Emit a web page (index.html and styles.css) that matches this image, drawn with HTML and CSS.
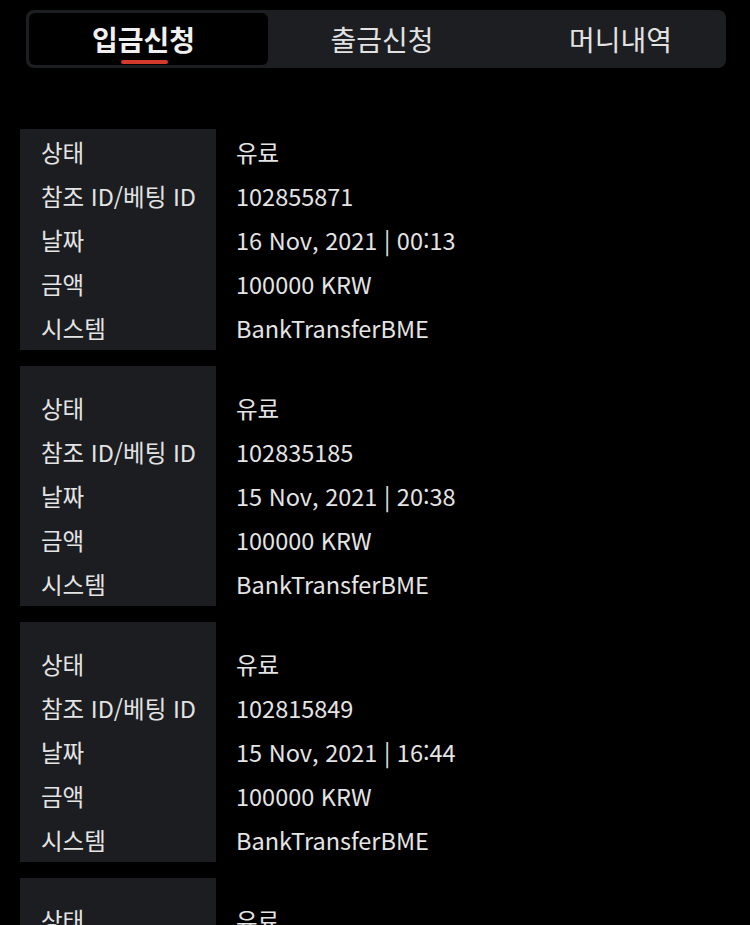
FILE: index.html
```html
<!DOCTYPE html>
<html lang="ko">
<head>
    <meta charset="UTF-8">
    <title>입금신청</title>
    <link rel="stylesheet" href="styles.css">
</head>
<body>
<div id="tabs">
    <div class="tab active">입금신청<span class="bar"></span></div>
    <div class="tab second">출금신청</div>
    <div class="tab third">머니내역</div>
</div>

<div id="list">
    <div class="card first">
        <div class="labels">
            <div>상태</div>
            <div>참조 ID/베팅 ID</div>
            <div>날짜</div>
            <div>금액</div>
            <div>시스템</div>
        </div>
        <div class="values">
            <div>유료</div>
            <div>102855871</div>
            <div>16 Nov, 2021 | 00:13</div>
            <div>100000 KRW</div>
            <div>BankTransferBME</div>
        </div>
    </div>
    <div class="card">
        <div class="labels">
            <div>상태</div>
            <div>참조 ID/베팅 ID</div>
            <div>날짜</div>
            <div>금액</div>
            <div>시스템</div>
        </div>
        <div class="values">
            <div>유료</div>
            <div>102835185</div>
            <div>15 Nov, 2021 | 20:38</div>
            <div>100000 KRW</div>
            <div>BankTransferBME</div>
        </div>
    </div>
    <div class="card">
        <div class="labels">
            <div>상태</div>
            <div>참조 ID/베팅 ID</div>
            <div>날짜</div>
            <div>금액</div>
            <div>시스템</div>
        </div>
        <div class="values">
            <div>유료</div>
            <div>102815849</div>
            <div>15 Nov, 2021 | 16:44</div>
            <div>100000 KRW</div>
            <div>BankTransferBME</div>
        </div>
    </div>
    <div class="card">
        <div class="labels">
            <div>상태</div>
            <div>참조 ID/베팅 ID</div>
            <div>날짜</div>
            <div>금액</div>
            <div>시스템</div>
        </div>
        <div class="values">
            <div>유료</div>
            <div>102801123</div>
            <div>15 Nov, 2021 | 12:05</div>
            <div>100000 KRW</div>
            <div>BankTransferBME</div>
        </div>
    </div>
</div>
</body>
</html>
```

FILE: styles.css
```css
* {
    margin: 0;
    padding: 0;
    box-sizing: border-box;
}

body {
    background-color: #000;
    color: #e4e4e4;
    font-family: "Noto Sans CJK KR", "Noto Sans", sans-serif;
    overflow: hidden;
}

#tabs {
    display: flex;
    width: 700px;
    height: 58px;
    margin: 10px 0 0 26px;
    padding: 3px;
    background-color: #1d1e22;
    border-radius: 8px;
}

.tab {
    position: relative;
    height: 52px;
    line-height: 52px;
    font-size: 28px;
    text-align: center;
    color: #e2e2e2;
}

.tab.active {
    width: 239px;
    padding-right: 10px;
    background-color: #000;
    border-radius: 6px;
    font-weight: 700;
    color: #f0f0f0;
}

.tab.second {
    width: 228px;
}

.tab.third {
    flex: 1;
    padding-left: 22px;
}

.bar {
    position: absolute;
    left: 92px;
    bottom: 1px;
    width: 47px;
    height: 4px;
    border-radius: 2px;
    background-color: #d33a2c;
}

#list {
    margin: 61px 0 0 20px;
}

.card {
    display: flex;
    margin-bottom: 16px;
}

.labels {
    width: 196px;
    padding: 20px 0 0 21px;
    background-color: #1c1d21;
}

.values {
    padding: 20px 0 0 20px;
}

.card.first .labels,
.card.first .values {
    padding-top: 1px;
}

.labels div,
.values div {
    height: 44px;
    line-height: 44px;
    font-size: 23.5px;
    white-space: nowrap;
}
```
